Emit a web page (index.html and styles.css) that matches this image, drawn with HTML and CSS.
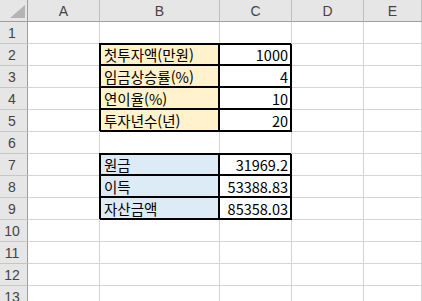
FILE: index.html
```html
<!DOCTYPE html>
<html lang="ko">
<head>
  <meta charset="UTF-8">
  <title>투자 계산</title>
  <link rel="stylesheet" href="styles.css">
</head>
<body>
  <div class="sheet">
    <!-- column headers -->
    <div class="corner"><span class="tri"></span></div>
    <div class="col-head">A</div>
    <div class="col-head">B</div>
    <div class="col-head">C</div>
    <div class="col-head">D</div>
    <div class="col-head">E</div>

    <div class="row-head">1</div>
    <div class="cell"></div><div class="cell"></div><div class="cell"></div><div class="cell"></div><div class="cell"></div>

    <!-- inputs -->
    <div class="row-head">2</div>
    <div class="cell"></div>
    <div class="cell box gold edge-top edge-left">첫투자액(만원)</div>
    <div class="cell box num edge-top">1000</div>
    <div class="cell"></div><div class="cell"></div>

    <div class="row-head">3</div>
    <div class="cell"></div>
    <div class="cell box gold edge-left">임금상승률(%)</div>
    <div class="cell box num">4</div>
    <div class="cell"></div><div class="cell"></div>

    <div class="row-head">4</div>
    <div class="cell"></div>
    <div class="cell box gold edge-left">연이율(%)</div>
    <div class="cell box num">10</div>
    <div class="cell"></div><div class="cell"></div>

    <div class="row-head">5</div>
    <div class="cell"></div>
    <div class="cell box gold edge-left">투자년수(년)</div>
    <div class="cell box num">20</div>
    <div class="cell"></div><div class="cell"></div>

    <div class="row-head">6</div>
    <div class="cell"></div><div class="cell"></div><div class="cell"></div><div class="cell"></div><div class="cell"></div>

    <!-- results -->
    <div class="row-head">7</div>
    <div class="cell"></div>
    <div class="cell box blue edge-top edge-left">원금</div>
    <div class="cell box num edge-top">31969.2</div>
    <div class="cell"></div><div class="cell"></div>

    <div class="row-head">8</div>
    <div class="cell"></div>
    <div class="cell box blue edge-left">이득</div>
    <div class="cell box num">53388.83</div>
    <div class="cell"></div><div class="cell"></div>

    <div class="row-head">9</div>
    <div class="cell"></div>
    <div class="cell box blue edge-left">자산금액</div>
    <div class="cell box num">85358.03</div>
    <div class="cell"></div><div class="cell"></div>

    <div class="row-head">10</div>
    <div class="cell"></div><div class="cell"></div><div class="cell"></div><div class="cell"></div><div class="cell"></div>
    <div class="row-head">11</div>
    <div class="cell"></div><div class="cell"></div><div class="cell"></div><div class="cell"></div><div class="cell"></div>
    <div class="row-head">12</div>
    <div class="cell"></div><div class="cell"></div><div class="cell"></div><div class="cell"></div><div class="cell"></div>
    <div class="row-head">13</div>
    <div class="cell"></div><div class="cell"></div><div class="cell"></div><div class="cell"></div><div class="cell"></div>
  </div>
</body>
</html>
```

FILE: styles.css
```css
body {
  margin: 0;
  background: #fff;
  overflow: hidden;
  font-family: "Noto Sans CJK KR", "Noto Sans", sans-serif;
  color: #000;
}

.sheet {
  display: grid;
  grid-template-columns: 28px 72px 120px 72px 72px 58px;
  grid-template-rows: 22px repeat(13, 22px);
}

.sheet > div {
  box-sizing: border-box;
  display: flex;
  align-items: center;
  white-space: nowrap;
}

/* header strip */
.corner,
.col-head,
.row-head {
  background: #e6e6e6;
  color: #444;
  font-family: "Liberation Sans", Arial, sans-serif;
}

.corner {
  position: relative;
  border-right: 1px solid #9e9e9e;
  border-bottom: 1px solid #9e9e9e;
}

.corner .tri {
  position: absolute;
  left: 10px;
  top: 5px;
  width: 0;
  height: 0;
  border-left: 15px solid transparent;
  border-bottom: 13px solid #b4b4b4;
}

.col-head {
  justify-content: center;
  font-size: 14px;
  border-right: 1px solid #bdbdbd;
  border-bottom: 1px solid #9e9e9e;
}

.row-head {
  justify-content: center;
  padding-right: 3px;
  font-size: 14px;
  border-right: 1px solid #9e9e9e;
  border-bottom: 1px solid #c6c6c6;
}

/* worksheet cells */
.cell {
  font-size: 14.5px;
  padding: 0 3px;
  border-right: 1px solid #d4d4d4;
  border-bottom: 1px solid #d4d4d4;
}

.cell.box {
  border-right: 2px solid #000;
  border-bottom: 2px solid #000;
  box-shadow: -1px -1px 0 #000;
}

.cell.edge-top {
  border-top: 1px solid #000;
}

.cell.edge-left {
  border-left: 1px solid #000;
}

.cell.num {
  justify-content: flex-end;
  padding-right: 2px;
}

.cell.gold {
  background: #fff2cc;
}

.cell.blue {
  background: #ddebf7;
}
```
